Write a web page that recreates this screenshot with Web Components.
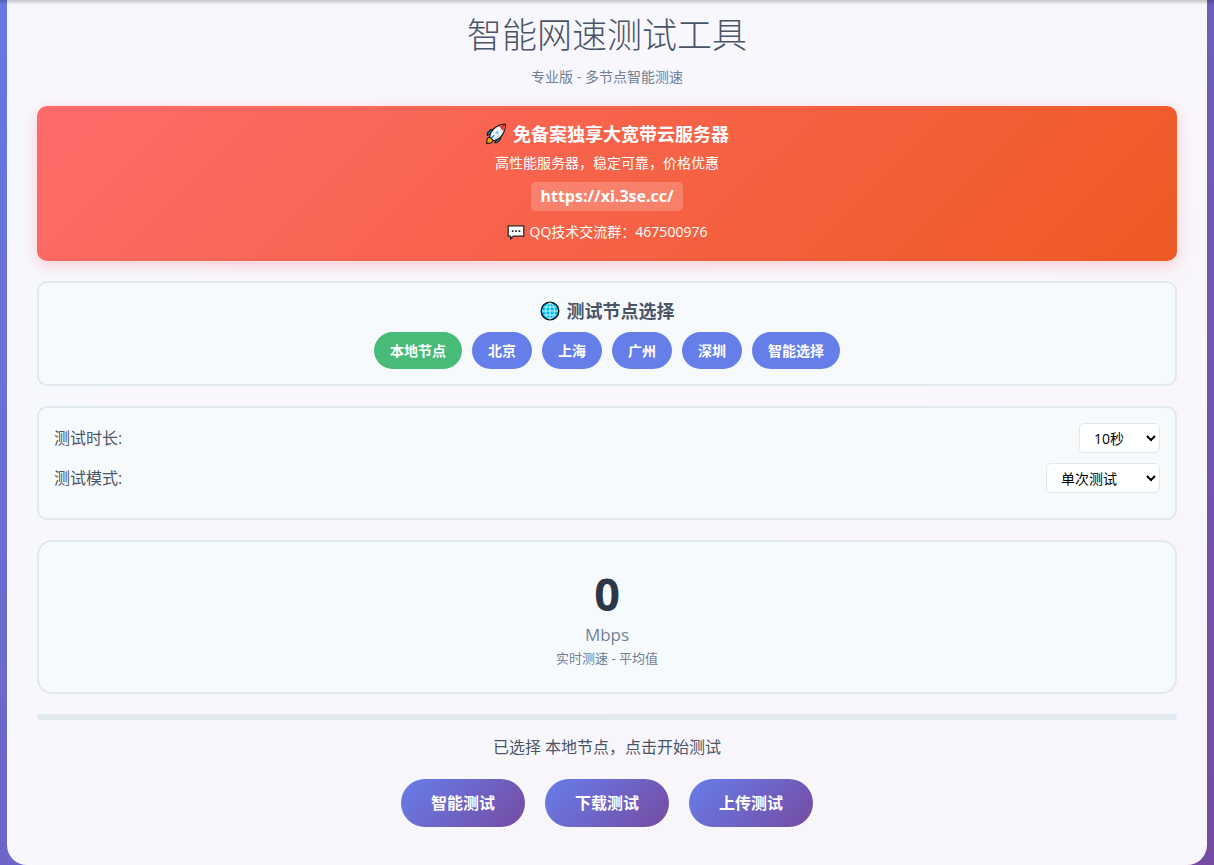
<!DOCTYPE html>
<html lang="zh-CN">
<head>
<meta charset="utf-8">
<meta name="viewport" content="width=device-width, initial-scale=1">
<title>智能网速测试工具</title>
<style>
html { min-height: 100%; background: linear-gradient(135deg, #6678e2 0%, #764ba2 100%); }
body { margin: 0; font-family: "Open Sans", "Noto Sans CJK SC", sans-serif; font-size: 16px; color: #4a5568; }
</style>
</head>
<body>
<speed-app>
  <app-header slot="header"><span slot="title">智能网速测试工具</span><span slot="subtitle">专业版 - 多节点智能测速</span></app-header>
  <promo-banner href="https://xi.3se.cc/">
    <span slot="title">免备案独享大宽带云服务器</span>
    <span slot="text">高性能服务器，稳定可靠，价格优惠</span>
    <span slot="contact">QQ技术交流群：467500976</span>
  </promo-banner>
  <ui-panel><node-picker nodes="本地节点,北京,上海,广州,深圳,智能选择">测试节点选择</node-picker></ui-panel>
  <ui-panel>
    <setting-row label="测试时长:" options="10秒,30秒,60秒" style="--select-width:81px"></setting-row>
    <setting-row label="测试模式:" options="单次测试,连续测试" style="--select-width:114px"></setting-row>
  </ui-panel>
  <ui-panel style="--radius:15px"><speed-readout value="0" unit="Mbps">实时测速 - 平均值</speed-readout></ui-panel>
  <progress-track></progress-track>
  <status-line>已选择 本地节点，点击开始测试</status-line>
  <action-bar>
    <action-button>智能测试</action-button>
    <action-button>下载测试</action-button>
    <action-button>上传测试</action-button>
  </action-bar>
</speed-app>
<script>
const define = (name, markup, setup) => {
  const template = document.createElement('template');
  template.innerHTML = markup;
  customElements.define(name, class extends HTMLElement {
    constructor() {
      super();
      this.attachShadow({ mode: 'open' }).append(template.content.cloneNode(true));
    }
    connectedCallback() {
      if (setup && !this.ready) { this.ready = true; setup(this, this.shadowRoot); }
    }
  });
};

define('speed-app', `
<style>
:host { display: block; position: relative; padding: 0 7px; }
:host::before { content: ""; position: absolute; inset: 0 0 auto; height: 5px; background: linear-gradient(rgba(0,0,0,.2), rgba(0,0,0,0)); }
main { max-width: 1200px; margin: 0 auto; padding: 11px 30px 38px; box-sizing: border-box; border-radius: 0 0 20px 20px; background: rgba(255,255,255,.95); }
</style>
<main><slot name="header"></slot><slot></slot></main>`);

define('app-header', `
<style>
:host { display: block; text-align: center; margin-bottom: 19px; }
h1 { margin: 0 0 8px; font-size: 35px; line-height: 48px; font-weight: 300; color: #4a5568; }
p { margin: 0; font-size: 14px; line-height: 20px; color: #718096; }
</style>
<h1><slot name="title"></slot></h1><p><slot name="subtitle"></slot></p>`);

define('promo-banner', `
<style>
:host { display: flex; flex-direction: column; align-items: center; padding: 15px 15px 17px; margin-bottom: 20px; border-radius: 10px; color: #fff; background: linear-gradient(135deg, #ff6b6b, #ee5a24); box-shadow: 0 4px 15px rgba(255,107,107,.3); font-size: 14px; line-height: 24px; }
h2 { display: flex; align-items: center; gap: 6px; margin: 0 0 6px; font-size: 18px; line-height: 26px; font-weight: 700; }
p { display: flex; align-items: center; gap: 5px; margin: 0; }
p.text { line-height: 20px; margin-bottom: 9px; }
a { padding: 0 9px; margin-bottom: 9px; border-radius: 5px; background: rgba(255,255,255,.2); color: #fff; font-size: 16px; line-height: 29px; font-weight: 700; text-decoration: none; }
svg { flex: none; }
</style>
<h2><svg width="22" height="22" viewBox="0 0 22 22" aria-hidden="true">
<path d="M1.6 20.6 2.2 15.6 5 13.4 8.6 17 6.6 19.7Z" fill="#f99d1c" stroke="#1b1b1b" stroke-width="1.1" stroke-linejoin="round"/>
<path d="M6.6 9.4 2.4 12.6 2.2 10.2 5.4 6.8 8.6 6.2ZM12.6 15.4 9.6 19.8 12 19.6 15.4 16.4 16 13Z" fill="#0095d7" stroke="#1b1b1b" stroke-width="1.1" stroke-linejoin="round"/>
<path d="M4.6 13.8C5.4 8 10.4 1.8 20.4 1.2 20.2 11.2 14.6 16.6 8.4 17.6Z" fill="#f4f7f8" stroke="#1b1b1b" stroke-width="1.2" stroke-linejoin="round"/>
<path d="M14.2 2.8Q17 1.7 19.9 1.7 19.9 5 18.9 7.8 15.4 6.5 14.2 2.8Z" fill="#e83b35"/>
<path d="M8.4 17Q13.4 15.6 16.2 12L12.6 12.4Z" fill="#cfd8dc"/>
<circle cx="12.2" cy="9.6" r="1.6" fill="#7cc9e6"/>
<path d="M6.2 15.2 9.2 12.2" stroke="#0095d7" stroke-width="1.6"/>
</svg><slot name="title"></slot></h2>
<p class="text"><slot name="text"></slot></p>
<a></a>
<p><svg width="18" height="16" viewBox="0 0 18 16" aria-hidden="true"><path d="M1.2 1.8H16.8V12.2H6.4L3.6 15V12.2H1.2Z" fill="#fff" stroke="#222" stroke-width="1.2" stroke-linejoin="round"/><path d="M4.8 6.2h1.7v1.7H4.8zM8.2 6.2h1.7v1.7H8.2zM11.6 6.2h1.7v1.7h-1.7z" fill="#222"/></svg><slot name="contact"></slot></p>`,
(host, root) => {
  const link = root.querySelector('a');
  link.href = link.textContent = host.getAttribute('href');
});

define('ui-panel', `
<style>
:host { display: block; padding: 15px; margin-bottom: 20px; border: 2px solid #e2e8f0; border-radius: var(--radius, 10px); background: #f7fafc; }
</style>
<slot></slot>`);

define('node-picker', `
<style>
:host { display: block; }
h3 { display: flex; justify-content: center; align-items: center; gap: 7px; margin: 0 0 8px; font-size: 18px; line-height: 26px; font-weight: 700; }
div { display: flex; flex-wrap: wrap; justify-content: center; gap: 10px; }
button { padding: 0 16px; border: 0; border-radius: 20px; background: #667eea; color: #fff; font: 600 14px/37px "Open Sans", "Noto Sans CJK SC", sans-serif; cursor: pointer; }
button[aria-pressed="true"] { background: #48bb78; }
</style>
<h3><svg width="20" height="20" viewBox="0 0 20 20" aria-hidden="true"><circle cx="10" cy="10" r="8.8" fill="#00bcf2" stroke="#111" stroke-width="1.4"/><g fill="none" stroke="#c5f3ff" stroke-width="1"><path d="M10 2v16M2 10h16M3.8 6h12.4M3.8 14h12.4"/><ellipse cx="10" cy="10" rx="4.3" ry="8"/></g></svg><slot></slot></h3>
<div role="group"></div>`,
(host, root) => {
  const group = root.querySelector('div');
  host.getAttribute('nodes').split(',').forEach((name, index) => {
    const button = document.createElement('button');
    button.type = 'button';
    button.textContent = name;
    button.setAttribute('aria-pressed', index === 0);
    button.onclick = () => group.querySelectorAll('button').forEach(b => b.setAttribute('aria-pressed', b === button));
    group.append(button);
  });
});

define('setting-row', `
<style>
:host { display: flex; justify-content: space-between; align-items: center; margin-bottom: 10px; }
label { font-size: 16px; line-height: 24px; }
select { width: var(--select-width); height: 30px; padding: 0 4px 0 10px; box-sizing: border-box; border: 1px solid #e2e8f0; border-radius: 5px; background: #fff; color: #000; font: 14px "Open Sans", "Noto Sans CJK SC", sans-serif; }
</style>
<label for="choice"></label><select id="choice"></select>`,
(host, root) => {
  root.querySelector('label').textContent = host.getAttribute('label');
  host.getAttribute('options').split(',').forEach(text => root.querySelector('select').add(new Option(text)));
});

define('speed-readout', `
<style>
:host { display: flex; flex-direction: column; align-items: center; padding: 9px 0; color: #718096; font-size: 13px; line-height: 20px; }
strong { font-size: 45px; line-height: 56px; font-weight: 700; color: #2d3748; }
span { font-size: 17px; line-height: 26px; }
p { margin: 0; }
</style>
<strong></strong><span></span><p><slot></slot></p>`,
(host, root) => {
  root.querySelector('strong').textContent = host.getAttribute('value');
  root.querySelector('span').textContent = host.getAttribute('unit');
});

define('progress-track', `
<style>:host { display: block; height: 6px; margin-bottom: 15px; border-radius: 3px; background: #e2e8f0; }</style>`,
host => { host.setAttribute('role', 'progressbar'); host.setAttribute('aria-valuenow', '0'); });

define('status-line', `
<style>:host { display: block; margin-bottom: 20px; text-align: center; font-size: 16px; line-height: 24px; }</style><slot></slot>`);

define('action-bar', `
<style>:host { display: flex; flex-wrap: wrap; justify-content: center; gap: 20px; }</style><slot></slot>`);

define('action-button', `
<style>
:host { display: block; }
button { padding: 0 30px; border: 0; border-radius: 25px; background: linear-gradient(135deg, #667eea, #764ba2); color: #fff; font: 600 16px/48px "Open Sans", "Noto Sans CJK SC", sans-serif; cursor: pointer; }
</style>
<button type="button"><slot></slot></button>`);
</script>
</body>
</html>
